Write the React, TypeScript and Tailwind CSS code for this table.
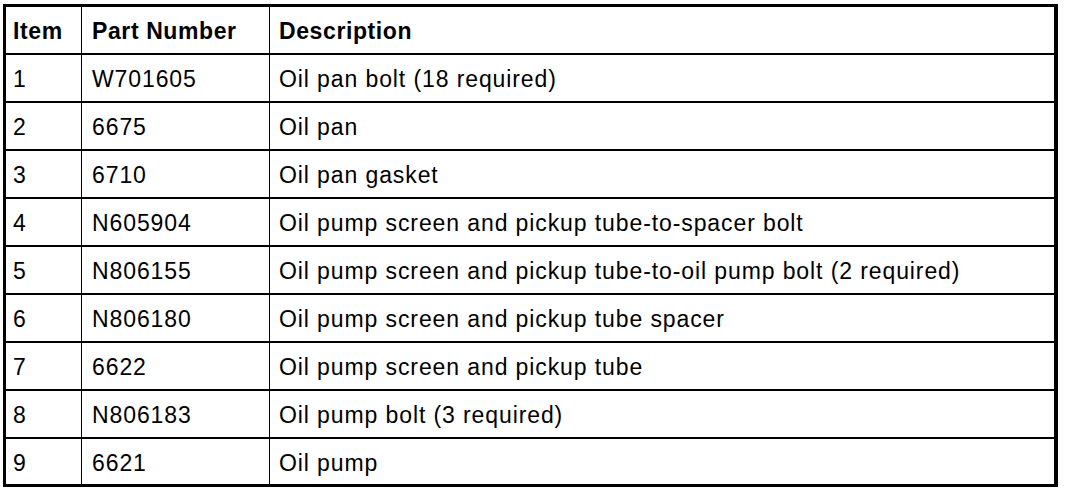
const rows = [
  { item: "1", part: "W701605", desc: "Oil pan bolt (18 required)" },
  { item: "2", part: "6675", desc: "Oil pan" },
  { item: "3", part: "6710", desc: "Oil pan gasket" },
  { item: "4", part: "N605904", desc: "Oil pump screen and pickup tube-to-spacer bolt" },
  { item: "5", part: "N806155", desc: "Oil pump screen and pickup tube-to-oil pump bolt (2 required)" },
  { item: "6", part: "N806180", desc: "Oil pump screen and pickup tube spacer" },
  { item: "7", part: "6622", desc: "Oil pump screen and pickup tube" },
  { item: "8", part: "N806183", desc: "Oil pump bolt (3 required)" },
  { item: "9", part: "6621", desc: "Oil pump" },
];

export default function App() {
  return (
    <div className="w-[1072px] h-[492px] bg-white pt-[4px] pl-[3px] font-['Liberation_Sans',Arial,sans-serif] text-black text-[23px] tracking-[0.9px]">
      <div className="w-[1055px] h-[483px] flex flex-col border-l-[3px] border-t-[3px] border-r-[4px] border-b-[3px] border-black">
        {/* Header */}
        <div className="grid grid-cols-[76px_188px_1fr] h-[48px] border-b-2 border-black font-bold tracking-[0.6px]">
          <div className="flex items-center pl-[7px] pt-[2px] border-r border-black">Item</div>
          <div className="flex items-center pl-[10px] pt-[2px] border-r border-black">Part Number</div>
          <div className="flex items-center pl-[9px] pt-[2px]">Description</div>
        </div>
        {rows.map((r, i) => (
          <div
            key={r.item}
            className={`grid grid-cols-[76px_188px_1fr] ${i === rows.length - 1 ? "flex-1" : "h-[48px] border-b-2 border-black"}`}
          >
            <div className="flex items-center pl-[7px] pt-[3px] border-r border-black">{r.item}</div>
            <div className="flex items-center pl-[10px] pt-[3px] border-r border-black">{r.part}</div>
            <div className="flex items-center pl-[9px] pt-[3px]">{r.desc}</div>
          </div>
        ))}
      </div>
    </div>
  );
}
